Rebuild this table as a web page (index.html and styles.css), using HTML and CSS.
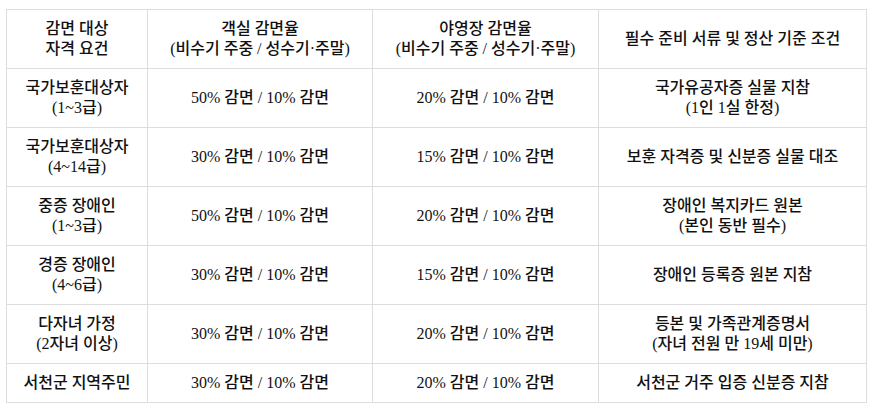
FILE: index.html
```html
<!DOCTYPE html>
<html lang="ko">
<head>
<meta charset="utf-8">
<link rel="stylesheet" href="styles.css">
</head>
<body>
<div class="wrap">
<table class="rates">
  <colgroup>
    <col class="c1"><col class="c2"><col class="c3"><col class="c4">
  </colgroup>
  <thead>
    <tr>
      <th>감면 대상<br>자격 요건</th>
      <th>객실 감면율<br>(비수기 주중 / 성수기·주말)</th>
      <th>야영장 감면율<br>(비수기 주중 / 성수기·주말)</th>
      <th>필수 준비 서류 및 정산 기준 조건</th>
    </tr>
  </thead>
  <tbody>
    <tr>
      <td>국가보훈대상자<br>(1~3급)</td>
      <td>50% 감면 / 10% 감면</td>
      <td>20% 감면 / 10% 감면</td>
      <td>국가유공자증 실물 지참<br>(1인 1실 한정)</td>
    </tr>
    <tr>
      <td>국가보훈대상자<br>(4~14급)</td>
      <td>30% 감면 / 10% 감면</td>
      <td>15% 감면 / 10% 감면</td>
      <td>보훈 자격증 및 신분증 실물 대조</td>
    </tr>
    <tr>
      <td>중증 장애인<br>(1~3급)</td>
      <td>50% 감면 / 10% 감면</td>
      <td>20% 감면 / 10% 감면</td>
      <td>장애인 복지카드 원본<br>(본인 동반 필수)</td>
    </tr>
    <tr>
      <td>경증 장애인<br>(4~6급)</td>
      <td>30% 감면 / 10% 감면</td>
      <td>15% 감면 / 10% 감면</td>
      <td>장애인 등록증 원본 지참</td>
    </tr>
    <tr>
      <td>다자녀 가정<br>(2자녀 이상)</td>
      <td>30% 감면 / 10% 감면</td>
      <td>20% 감면 / 10% 감면</td>
      <td>등본 및 가족관계증명서<br>(자녀 전원 만 19세 미만)</td>
    </tr>
    <tr>
      <td>서천군 지역주민</td>
      <td>30% 감면 / 10% 감면</td>
      <td>20% 감면 / 10% 감면</td>
      <td>서천군 거주 입증 신분증 지참</td>
    </tr>
  </tbody>
</table>
</div>
</body>
</html>
```

FILE: styles.css
```css
html, body {
  margin: 0;
  padding: 0;
  background: #ffffff;
}
.wrap {
  padding: 9px 6px 0 6px;
}
.rates {
  border-collapse: collapse;
  table-layout: fixed;
  width: 860px;
  font-family: "Liberation Serif", "Noto Sans CJK KR", serif;
  font-size: 16px;
  line-height: 20px;
  font-weight: 500;
  color: #111111;
}
.c1 { width: 141px; }
.c2 { width: 225px; }
.c3 { width: 226px; }
.c4 { width: 268px; }
.rates th,
.rates td {
  border: 1px solid #dddddd;
  padding: 9px 4px;
  text-align: center;
  vertical-align: middle;
  font-weight: 500;
}
```
